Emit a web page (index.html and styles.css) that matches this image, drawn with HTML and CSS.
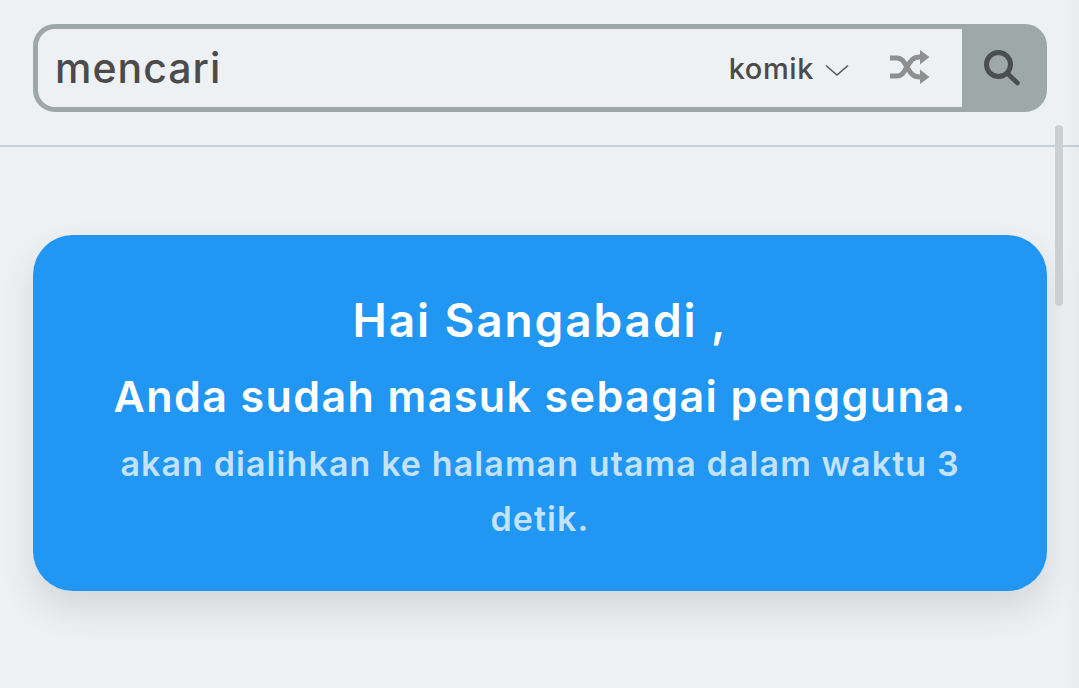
FILE: index.html
```html
<!DOCTYPE html>
<html lang="id">
<head>
<meta charset="utf-8">
<title>mencari</title>
<link rel="stylesheet" href="styles.css">
</head>
<body>
<header class="topbar">
  <div class="search">
    <div class="search-main">
      <span class="search-input">mencari</span>
      <span class="category">komik
        <svg class="chevron" viewBox="0 0 24 12" width="24" height="12" aria-hidden="true"><path d="M1 1.5 12 11 23 1.5" fill="none" stroke="#555" stroke-width="1.5"/></svg>
      </span>
      <svg class="shuffle" viewBox="0 0 40 34" width="40" height="34" aria-hidden="true">
        <path d="M0 8h7c5 0 7 4 10 9s5 10 13 10h2M0 26h7c5 0 7-4 10-9s5-10 13-10h2" fill="none" stroke="#8f8f8f" stroke-width="5"/>
        <path d="M30 0l9.500 7-9.500 7.500zM30 19.500l9.500 7.500-9.500 7z" fill="#8f8f8f"/>
      </svg>
    </div>
    <div class="search-btn">
      <svg viewBox="0 0 36 36" width="36" height="36" aria-hidden="true">
        <circle cx="14.500" cy="14.500" r="12" fill="none" stroke="#4a4e4e" stroke-width="5"/>
        <path d="M24 24 33.500 33" stroke="#4a4e4e" stroke-width="4.500" stroke-linecap="round"/>
      </svg>
    </div>
  </div>
</header>
<main class="content">
  <section class="notice">
    <h1 class="hello">Hai Sangabadi ,</h1>
    <h2 class="status">Anda sudah masuk sebagai pengguna.</h2>
    <p class="redirect">akan dialihkan ke halaman utama dalam waktu 3 detik.</p>
  </section>
</main>
<div class="scroll-thumb"></div>
</body>
</html>
```
FILE: styles.css
```css
* { box-sizing: border-box; }
html, body { height: 100%; }
body {
  margin: 0;
  overflow: hidden;
  background: #edf1f4;
  font-family: "Inter", "Lato", sans-serif;
}
body::after {
  content: "";
  position: fixed;
  top: 0; right: 0; bottom: 0;
  width: 14px;
  background: linear-gradient(to right, rgba(0,0,0,0), rgba(0,0,0,.025));
}
.topbar {
  height: 147px;
  padding: 24px 32px 0 33px;
  border-bottom: 2px solid #c3d1dc;
}
.search {
  height: 88px;
  display: flex;
  border: 5px solid #9ea8a8;
  border-radius: 22px;
  background: #9ea8a8;
}
.search-main {
  flex: 1;
  display: flex;
  align-items: center;
  background: #edf1f4;
  border-radius: 17px 0 0 17px;
}
.search-input {
  flex: 1;
  padding-left: 17px;
  font-size: 41px;
  color: #4b4b4b;
  font-weight: 500;
  letter-spacing: 1px;
}
.category {
  display: flex;
  align-items: center;
  gap: 11px;
  font-size: 29px;
  font-weight: 500;
  color: #4b4b4b;
  letter-spacing: 0.6px;
}
.chevron { margin-top: 3px; }
.shuffle { margin-left: 41px; margin-right: 32px; margin-top: -2px; }
.search-btn {
  width: 80px;
  display: flex;
  align-items: center;
  justify-content: center;
  padding-right: 1px;
}
.content { padding: 88px 32px 0 33px; }
.notice {
  height: 356px;
  padding: 54px 80px 0;
  border-radius: 40px;
  background: #2196f3;
  text-align: center;
  box-shadow: 0 18px 36px rgba(0,0,0,.11);
}
.hello {
  margin: 0;
  font-size: 46px;
  line-height: 62px;
  font-weight: 600;
  color: #fff;
  letter-spacing: 1.9px;
}
.status {
  margin: 17px -10px 0;
  font-size: 43px;
  line-height: 56px;
  font-weight: 600;
  color: #fff;
  letter-spacing: 1.4px;
  white-space: nowrap;
}
.redirect {
  margin: 12px -10px 0;
  font-size: 34px;
  line-height: 55px;
  font-weight: 600;
  color: #c3e2fc;
  letter-spacing: 1.1px;
}
.scroll-thumb {
  position: fixed;
  top: 125px;
  left: 1055px;
  width: 8px;
  height: 181px;
  border-radius: 4px;
  background: #cdd0d2;
}
```
